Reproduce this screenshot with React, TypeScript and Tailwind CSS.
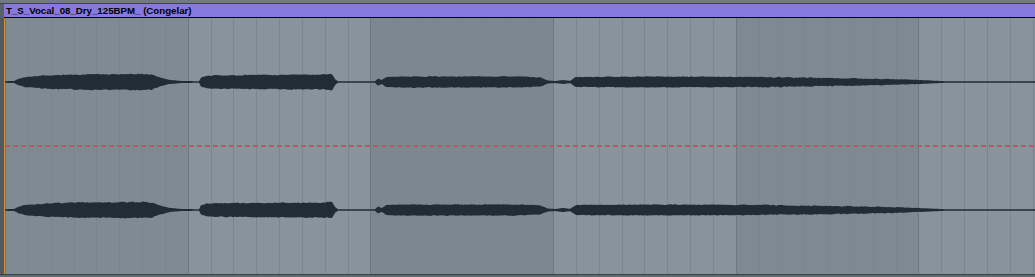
import React from 'react';

// envelope of the clip: [x, half height]
const envelope: [number, number][] = [
    [4, 0.8], [14, 1], [18, 3], [25, 5], [45, 6.5], [70, 7.5], [140, 8], [152, 7.5],
    [160, 4.5], [170, 2], [182, 1], [199, 0.8], [201, 4.5], [207, 6.5], [250, 7], [320, 7.5],
    [332, 8], [335, 3], [338, 0.8], [375, 0.8], [378, 3.5], [382, 2], [386, 5], [400, 5.5],
    [520, 5.5], [540, 4.5], [548, 1.5], [555, 1], [563, 2], [570, 1.2], [576, 5], [650, 5.5],
    [760, 5], [800, 4.5], [880, 3.2], [915, 2.2], [945, 0.8], [1035, 0.7],
];

const ampAt = (x: number) => {
    for (let i = 1; i < envelope.length; i++) {
        const [x1, a1] = envelope[i];
        const [x0, a0] = envelope[i - 1];
        if (x <= x1) return a0 + ((a1 - a0) * (x - x0)) / (x1 - x0);
    }
    return 0.7;
};

const makeRand = (seed: number) => {
    let s = seed;
    return () => {
        s = (s * 9301 + 49297) % 233280;
        return s / 233280;
    };
};

const wavePath = (cy: number, seed: number) => {
    const rand = makeRand(seed);
    const top: string[] = [];
    const bottom: string[] = [];
    let n1 = 1;
    let n2 = 1;
    for (let x = 4; x <= 1035; x++) {
        const a = ampAt(x);
        // rougher edges toward the tail
        const spread = x > 760 ? 0.4 : 0.22;
        n1 = n1 * 0.5 + (1 - spread / 2 + rand() * spread) * 0.5;
        n2 = n2 * 0.5 + (1 - spread / 2 + rand() * spread) * 0.5;
        const j1 = a > 1.5 ? n1 : 1;
        const j2 = a > 1.5 ? n2 : 1;
        top.push(`${x},${(cy - a * j1).toFixed(2)}`);
        bottom.unshift(`${x},${(cy + a * j2).toFixed(2)}`);
    }
    return `M${top.join(' L')} L${bottom.join(' L')} Z`;
};

const bandColors = ['bg-[#7f8a92]', 'bg-[#88949c]', 'bg-[#7c878f]', 'bg-[#88949c]', 'bg-[#7e8991]', 'bg-[#88949c]'];

const Band = ({ color }: { color: string }) => (
    <div className={`flex h-full w-[182.7px] shrink-0 border-l border-[#6c777f] ${color}`}>
        {Array.from({ length: 8 }).map((_, i) => (
            <div key={i} className={`flex-1 ${i > 0 ? 'border-l border-[#7a858d]' : ''}`} />
        ))}
    </div>
);

export default function App() {
    const wave1 = wavePath(64, 7);
    const wave2 = wavePath(192, 31);

    return (
        <div className="flex h-[277px] w-[1035px] flex-col overflow-hidden bg-[#5e676f]" style={{ fontFamily: '"Liberation Sans", Arial, sans-serif' }}>
            <div className="h-[3px] bg-[#737a81]" />
            <div className="h-[1px] bg-[#3d4247]" />
            <div className="flex h-[14px]">
                <div className="w-[4px] bg-[#5a6168]" />
                <div className="flex flex-1 items-center border-b border-black bg-[#8779df] pl-[2px]">
                    <span className="text-[9.7px] font-bold leading-none text-black">T_S_Vocal_08_Dry_125BPM_ (Congelar)</span>
                </div>
            </div>
            <div className="flex h-[256px]">
                <div className="w-[4px] bg-[#525a61]" />
                <div className="relative flex flex-1 overflow-hidden border-l border-[#d68c3e]">
                    {bandColors.map((c, i) => (
                        <Band key={i} color={c} />
                    ))}
                    <svg className="absolute left-[-5px] top-0" width="1035" height="256">
                        <path d={wave1} fill="#222c36" />
                        <path d={wave2} fill="#222c36" />
                    </svg>
                    <div className="absolute left-0 right-0 top-[127px] h-[2px] bg-[repeating-linear-gradient(90deg,#b85862_0_5px,transparent_5px_8px)]" />
                </div>
            </div>
            <div className="h-[1px] bg-[#3b444b]" />
            <div className="flex-1 bg-[#5f6970]" />
        </div>
    );
}
